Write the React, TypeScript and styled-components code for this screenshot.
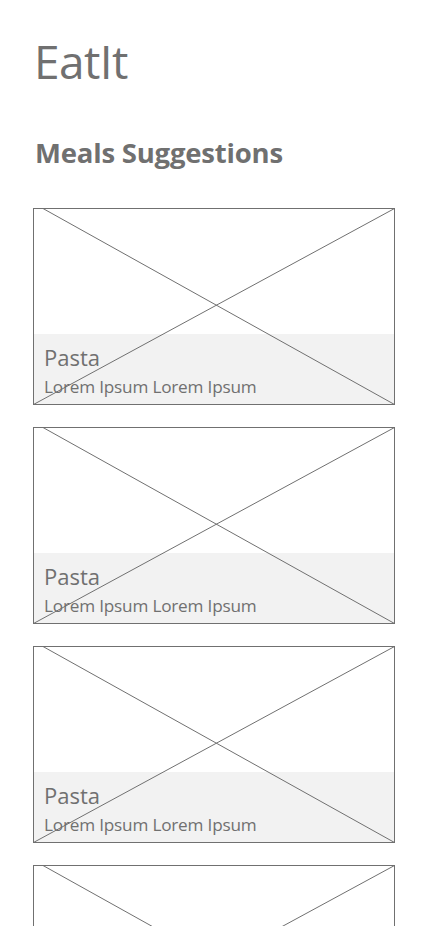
import React from "react";
import styled, { createGlobalStyle } from "styled-components";

const meals = [
  { name: "Pasta", text: "Lorem Ipsum Lorem Ipsum" },
  { name: "Pasta", text: "Lorem Ipsum Lorem Ipsum" },
  { name: "Pasta", text: "Lorem Ipsum Lorem Ipsum" },
  { name: "Pasta", text: "Lorem Ipsum Lorem Ipsum" },
];

const App = () => {
  return (
    <>
      <GlobalStyle />
      <Page>
        <Logo>EatIt</Logo>
        <SectionTitle>Meals Suggestions</SectionTitle>
        <CardList>
          {meals.map((meal, i) => (
            <Card key={i}>
              <Cross viewBox="0 0 362 197" preserveAspectRatio="none">
                <line x1="10" y1="0.5" x2="361.5" y2="196.5" />
                <line x1="0.5" y1="196.5" x2="361.5" y2="0.5" />
              </Cross>
              <Band>
                <MealName>{meal.name}</MealName>
                <MealText>{meal.text}</MealText>
              </Band>
            </Card>
          ))}
        </CardList>
      </Page>
    </>
  );
};

export default App;

const GlobalStyle = createGlobalStyle`
  html, body {
    margin: 0;
    padding: 0;
    background: #fff;
  }
  body {
    font-family: "Open Sans", "Noto Sans", sans-serif;
    color: #707070;
  }
`;

const Page = styled.div`
  width: 428px;
  box-sizing: border-box;
  padding: 29px 0 24px 33px;
`;

const Logo = styled.h1`
  margin: 0;
  padding-left: 1px;
  font-size: 46px;
  font-weight: 400;
  line-height: 64px;
  color: #707070;
  letter-spacing: -0.6px;
`;

const SectionTitle = styled.h2`
  margin: 41px 0 0;
  padding-left: 2px;
  font-size: 27.5px;
  font-weight: 700;
  line-height: 37px;
  color: #707070;
  letter-spacing: -0.2px;
`;

const CardList = styled.div`
  display: flex;
  flex-direction: column;
  gap: 22px;
  margin-top: 37px;
`;

const Card = styled.div`
  position: relative;
  width: 362px;
  height: 197px;
  box-sizing: border-box;
  border: 1px solid #707070;
  display: flex;
  flex-direction: column;
  justify-content: flex-end;
  flex-shrink: 0;
`;

const Cross = styled.svg`
  position: absolute;
  inset: -1px;
  width: 362px;
  height: 197px;
  z-index: 1;
  pointer-events: none;
  line {
    stroke: #707070;
    stroke-width: 1;
  }
`;

const Band = styled.div`
  height: 70px;
  background: #f2f2f2;
  box-sizing: border-box;
  padding: 8px 0 0 10px;
  display: flex;
  flex-direction: column;
`;

const MealName = styled.div`
  font-size: 22px;
  line-height: 30px;
  color: #707070;
`;

const MealText = styled.div`
  font-size: 17.2px;
  line-height: 24px;
  margin-top: 3px;
  color: #707070;
  letter-spacing: -0.2px;
`;
